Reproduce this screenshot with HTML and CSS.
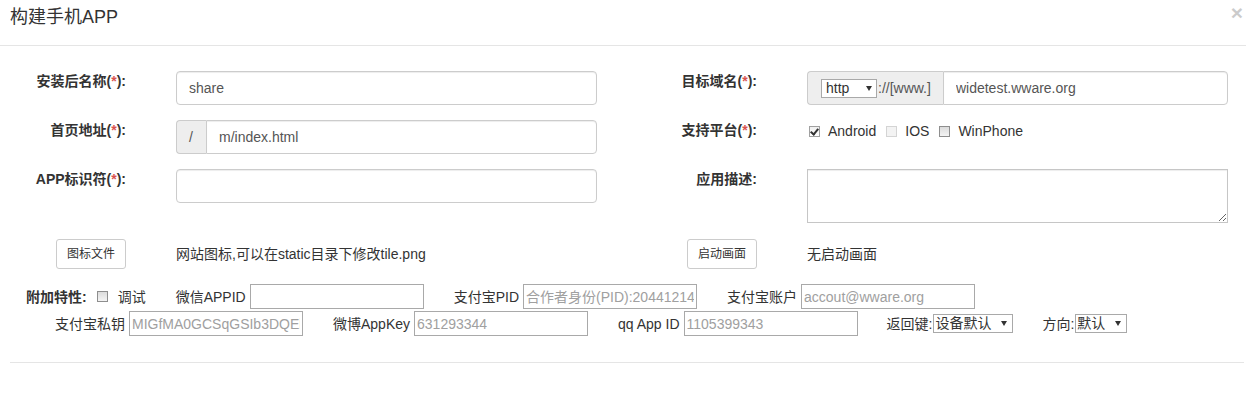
FILE: index.html
```html
<!DOCTYPE html>
<html lang="zh-CN">
<head>
    <meta charset="UTF-8">
    <meta name="viewport" content="width=device-width, initial-scale=1.0">
    <title>构建手机APP</title>
    <link rel="stylesheet" href="styles.css">
</head>
<body>
    <div class="modal">
        <div class="modal-header">
            <button type="button" class="close">&times;</button>
            <h4 class="modal-title">构建手机APP</h4>
        </div>

        <div class="modal-body">
            <div class="form-grid">
                <label class="form-label">安装后名称(<span class="req">*</span>):</label>
                <div class="form-ctrl">
                    <input type="text" class="form-control" value="share">
                </div>
                <label class="form-label">目标域名(<span class="req">*</span>):</label>
                <div class="form-ctrl">
                    <div class="input-group">
                        <span class="addon">
                            <span class="select-wrap">
                                <select class="mini-select proto-select">
                                    <option>http</option>
                                    <option>https</option>
                                </select>
                            </span>://[www.]
                        </span>
                        <input type="text" class="form-control" value="widetest.wware.org">
                    </div>
                </div>

                <label class="form-label">首页地址(<span class="req">*</span>):</label>
                <div class="form-ctrl">
                    <div class="input-group">
                        <span class="addon addon-slash">/</span>
                        <input type="text" class="form-control" value="m/index.html">
                    </div>
                </div>
                <label class="form-label">支持平台(<span class="req">*</span>):</label>
                <div class="form-ctrl platforms">
                    <label class="check"><input type="checkbox" class="box" checked>Android</label>
                    <label class="check"><input type="checkbox" class="box" disabled>IOS</label>
                    <label class="check"><input type="checkbox" class="box">WinPhone</label>
                </div>

                <label class="form-label">APP标识符(<span class="req">*</span>):</label>
                <div class="form-ctrl">
                    <input type="text" class="form-control">
                </div>
                <label class="form-label">应用描述:</label>
                <div class="form-ctrl">
                    <textarea class="form-control desc"></textarea>
                </div>

                <div class="form-label btn-cell">
                    <button type="button" class="btn">图标文件</button>
                </div>
                <div class="form-ctrl note">网站图标,可以在static目录下修改tile.png</div>
                <div class="form-label btn-cell">
                    <button type="button" class="btn">启动画面</button>
                </div>
                <div class="form-ctrl note">无启动画面</div>
            </div>

            <div class="extra">
                <div class="extra-line first">
                    <span class="extra-title">附加特性:</span>
                    <label class="check debug"><input type="checkbox" class="box">调试</label>
                    <span class="field">微信APPID <input type="text" class="small-input"></span>
                    <span class="field">支付宝PID <input type="text" class="small-input" placeholder="合作者身份(PID):20441214"></span>
                    <span class="field">支付宝账户 <input type="text" class="small-input" placeholder="accout@wware.org"></span>
                </div>
                <div class="extra-line second">
                    <span class="field">支付宝私钥 <input type="text" class="small-input" placeholder="MIGfMA0GCSqGSIb3DQEl"></span>
                    <span class="field">微博AppKey <input type="text" class="small-input" placeholder="631293344"></span>
                    <span class="field">qq App ID <input type="text" class="small-input" placeholder="1105399343"></span>
                    <span class="field tight">返回键:<span class="select-wrap"><select class="mini-select back-select"><option>设备默认</option></select></span></span>
                    <span class="field tight">方向:<span class="select-wrap"><select class="mini-select dir-select"><option>默认</option></select></span></span>
                </div>
            </div>
        </div>

        <div class="modal-footer"></div>
    </div>
</body>
</html>
```

FILE: styles.css
```css
body {
    margin: 0;
    padding: 0;
    font-family: "Liberation Sans", "Noto Sans CJK SC", sans-serif;
    font-size: 14px;
    line-height: 20px;
    color: #333;
    background: #fff;
}

.modal {
    position: relative;
    width: 1246px;
}

/* header */
.modal-header {
    padding: 7px 10px 0;
    height: 38px;
    border-bottom: 1px solid #e5e5e5;
}

.modal-title {
    margin: 0;
    font-size: 18px;
    line-height: 20px;
    font-weight: normal;
    color: #333;
}

.close {
    position: absolute;
    top: 2px;
    right: 3px;
    padding: 0;
    border: 0;
    background: transparent;
    font-family: "Liberation Sans", sans-serif;
    font-size: 21px;
    font-weight: bold;
    line-height: 21px;
    color: #000;
    opacity: 0.2;
}

/* body */
.modal-body {
    padding: 25px 0 25px;
}

.form-grid {
    display: grid;
    grid-template-columns: 176px 421px 210px 421px;
    row-gap: 15px;
    align-items: start;
}

.form-label {
    padding-right: 50px;
    text-align: right;
    font-weight: bold;
    line-height: 20px;
}

.req {
    color: #d9534f;
}

.form-control {
    display: block;
    box-sizing: border-box;
    width: 100%;
    height: 34px;
    padding: 6px 12px;
    font-family: inherit;
    font-size: 14px;
    line-height: 20px;
    color: #555;
    background: #fff;
    border: 1px solid #ccc;
    border-radius: 4px;
    box-shadow: inset 0 1px 1px rgba(0, 0, 0, 0.075);
    outline: none;
}

.desc {
    height: 54px;
    border-radius: 0;
    border-color: #c6c6c6;
    resize: both;
}

.input-group {
    display: flex;
}

.input-group .form-control {
    flex: 1;
    border-top-left-radius: 0;
    border-bottom-left-radius: 0;
}

.addon {
    display: flex;
    align-items: center;
    box-sizing: border-box;
    height: 34px;
    padding: 0 12px 0 13px;
    color: #555;
    background: #eee;
    border: 1px solid #ccc;
    border-right: 0;
    border-radius: 4px 0 0 4px;
    white-space: nowrap;
}

.addon-slash {
    width: 30px;
    padding: 0 0 0 12px;
}

/* small native-looking selects */
.select-wrap {
    position: relative;
    display: inline-block;
}

.select-wrap::after {
    content: "";
    position: absolute;
    top: 7px;
    right: 6px;
    border-left: 3px solid transparent;
    border-right: 3px solid transparent;
    border-top: 5px solid #333;
    pointer-events: none;
}

.mini-select {
    display: block;
    box-sizing: border-box;
    height: 19px;
    margin: 0;
    padding: 0 0 0 1px;
    font-family: inherit;
    font-size: 14px;
    line-height: 17px;
    color: #333;
    background: #fff;
    border: 1px solid #a9a9a9;
    border-radius: 0;
    -webkit-appearance: none;
    appearance: none;
}

.proto-select {
    width: 56px;
    padding-left: 4px;
    margin-right: 1px;
}

.back-select {
    width: 80px;
}

.dir-select {
    width: 52px;
}

/* checkboxes */
.platforms {
    display: flex;
    align-items: center;
    height: 22px;
    padding-left: 2px;
}

.check {
    display: inline-flex;
    align-items: center;
    margin-right: 10px;
    white-space: nowrap;
}

.box {
    position: relative;
    box-sizing: border-box;
    width: 11px;
    height: 11px;
    margin: 0 8px 0 0;
    border: 1px solid #8e8e8e;
    background: linear-gradient(#dcdcdc, #f4f4f4);
    -webkit-appearance: none;
    appearance: none;
}

.box:checked {
    background: linear-gradient(#f0f0f0, #fff);
    border-color: #a0a0a0;
}

.box:checked::after {
    content: "";
    position: absolute;
    left: 2px;
    top: 0px;
    width: 3px;
    height: 6px;
    border-right: 2px solid #333;
    border-bottom: 2px solid #333;
    transform: rotate(40deg);
}

.box:disabled {
    border-color: #d4d4d4;
    background: #f3f3f3;
}

/* buttons row */
.btn-cell {
    margin-top: 1px;
}

.btn {
    display: inline-block;
    padding: 5px 10px;
    font-family: inherit;
    font-size: 12px;
    line-height: 18px;
    color: #333;
    background: #fff;
    border: 1px solid #ccc;
    border-radius: 3px;
}

.note {
    margin-top: 1px;
    line-height: 30px;
}

/* extra options */
.extra {
    margin-top: 14px;
}

.extra-line {
    display: flex;
    align-items: center;
    height: 27px;
    white-space: nowrap;
}

.extra-line.first {
    padding-left: 26px;
}

.extra-line.second {
    padding-left: 55px;
}

.extra-title {
    font-weight: bold;
    margin-right: 10px;
}

.check.debug {
    margin-right: 0;
}

.check.debug .box {
    margin-right: 10px;
}

.field {
    display: inline-flex;
    align-items: center;
    gap: 4px;
    margin-left: 30px;
}

.extra-line.second .field:first-child {
    margin-left: 0;
}

.field.tight {
    gap: 1px;
    margin-left: 29px;
}

.small-input {
    box-sizing: border-box;
    width: 174px;
    height: 25px;
    margin-left: 0;
    padding: 0 2px;
    font-family: inherit;
    font-size: 14px;
    color: #555;
    border: 1px solid #a9a9a9;
    outline: none;
}

.small-input::placeholder {
    color: #a0a0a0;
}

/* footer */
.modal-footer {
    margin: 0 2px 0 10px;
    border-top: 1px solid #e5e5e5;
    height: 33px;
}
```
